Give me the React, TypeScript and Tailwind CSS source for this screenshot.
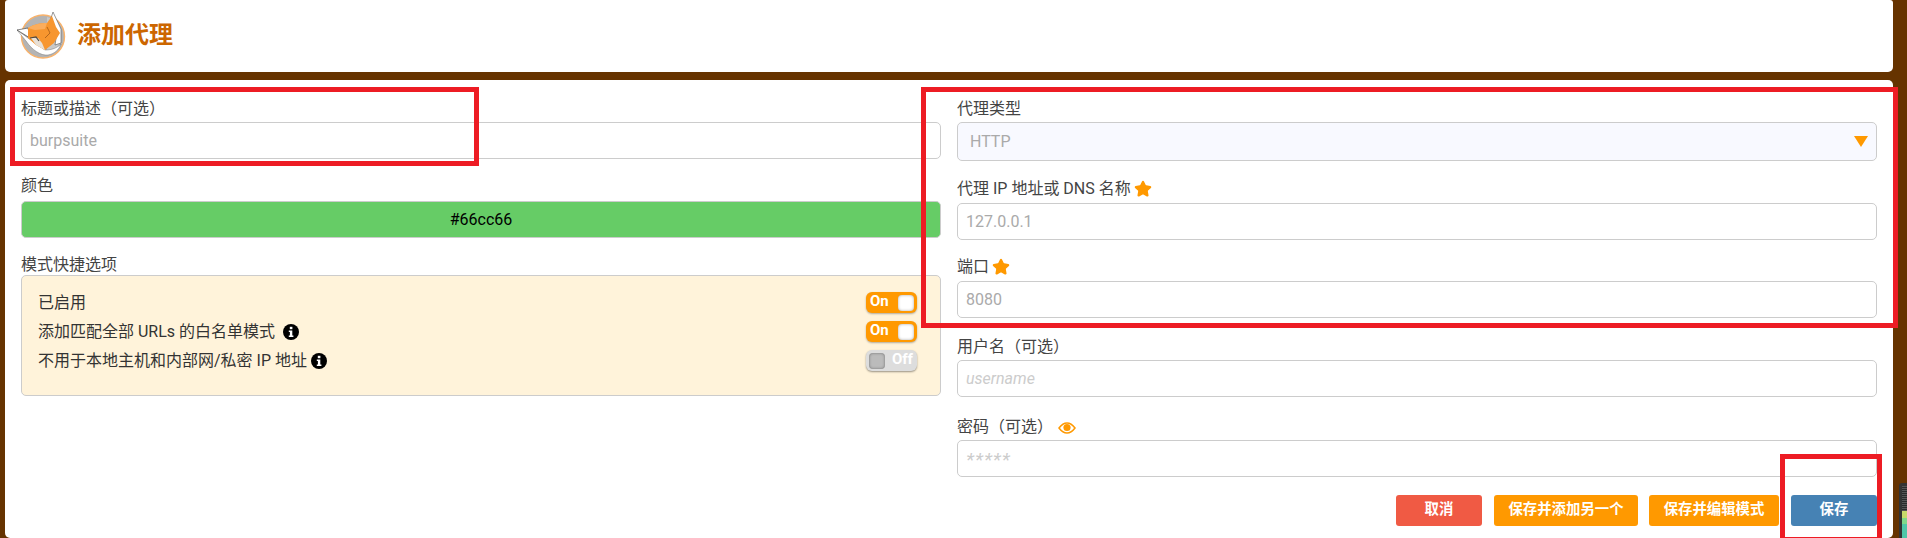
import { Star } from 'lucide-react'

const font = "font-['Roboto','Noto_Sans_CJK_SC',sans-serif]"

function FoxLogo() {
  return (
    <svg width="50" height="48" viewBox="0 0 50 48" className="shrink-0">
      <circle cx="26" cy="24.5" r="21.5" fill="#b4b4b4" stroke="#f9b26a" strokeWidth="1.4" />
      <path d="M30 5A19 19 0 0 1 44 24.5A19 19 0 0 1 30 43Z" fill="#c9c9c9" />
      <path d="M0 18L9 29C15 38 24 44 31 43C37 42 42 38 44 32C39 37 33 38 28 38L11 26Z" fill="#fff" stroke="#777" strokeWidth="0.5" />
      <path d="M36 0L44 17L44 31L38 33L40 20L33 9Z" fill="#fff" stroke="#555" strokeWidth="0.6" />
      <path d="M0 18L11 16L13 26Z" fill="#fff" stroke="#333" strokeWidth="0.6" />
      <path d="M11 16C17 12 24 11 30 11L35 4L39 15L43 21L37 31L28 38L19 33L11 26Z" fill="#f7962f" />
      <path d="M11 16C17 12 24 11 30 11L28 17L18 18Z" fill="#fbad5c" />
      <path d="M14 26L21 26L25 31L28 38L19 33Z" fill="#e8e0d6" />
      <path d="M13 26L19 25L22 29" fill="none" stroke="#4d4a46" strokeWidth="1.2" />
      <path d="M30 15L33 21L28 26" fill="none" stroke="#b4661c" strokeWidth="1" />
    </svg>
  )
}

function Toggle({ on }: { on: boolean }) {
  if (on) {
    return (
      <div className="flex h-[21px] w-[51px] items-center justify-between rounded-[6px] bg-[#ff9900] pl-[4px] pr-[3px] shadow-[0_1px_2px_rgba(0,0,0,0.3)]">
        <span className="pb-[2px] text-[15px] font-bold leading-none text-[#fff]">On</span>
        <span className="h-[16px] w-[16px] rounded-[4px] bg-white shadow-[inset_0_0_3px_rgba(0,0,0,0.35)]" />
      </div>
    )
  }
  return (
    <div className="flex h-[21px] w-[51px] items-center justify-between rounded-[6px] bg-[#dddddd] pl-[3px] pr-[4px] shadow-[0_1px_2px_rgba(0,0,0,0.4)]">
      <span className="h-[16px] w-[16px] rounded-[4px] bg-[#bbbbbb] shadow-[inset_0_0_3px_rgba(0,0,0,0.4)]" />
      <span className="pb-[2px] text-[15px] font-bold leading-none text-white">Off</span>
    </div>
  )
}

function Field({ label, value, italic, className, labelClass = 'pb-[5px]' }: { label: React.ReactNode; value: React.ReactNode; italic?: boolean; className?: string; labelClass?: string }) {
  return (
    <div className={className}>
      <div className={`flex h-[22px] items-center text-[#444] ${labelClass}`}>{label}</div>
      <div className={`flex h-[37px] items-center rounded-[5px] border border-[#cccccc] pl-[8px] pt-[1px] ${italic ? 'italic text-[#cccccc]' : 'text-[#aaaaaa]'}`}>{value}</div>
    </div>
  )
}

function FilledStar() {
  return <Star size={18} fill="#ff9900" stroke="#ff9900" className="ml-[3px]" />
}

const stateRows = [
  { label: '已启用', on: true, infoGap: '' },
  { label: '添加匹配全部 URLs 的白名单模式', on: true, infoGap: 'ml-[8px]' },
  { label: '不用于本地主机和内部网/私密 IP 地址', on: false, infoGap: 'ml-[4px]' },
]

export default function App() {
  return (
    <div className={`${font} relative h-[538px] overflow-hidden bg-[#663300] pl-[5px] pr-[14px] text-[16px]`}>
      <header className="flex h-[72px] items-center rounded-b-[5px] rounded-t-[3px] bg-white pl-[12px]">
        <FoxLogo />
        <h1 className="ml-[10px] pb-[2px] text-[24px] font-bold text-[#cc6600]">添加代理</h1>
      </header>

      <main className="mt-[8px] h-[458px] rounded-[5px] bg-white px-[16px] pt-[20px]">
        <div className="grid grid-cols-2 gap-x-[16px]">
          <div>
            <Field label="标题或描述（可选）" value="burpsuite" />
            <div className="mt-[17px] flex h-[25px] items-center pb-[5px] text-[#444]">颜色</div>
            <div className="flex h-[37px] items-center justify-center rounded-[5px] border border-[#cccccc] bg-[#66cc66] text-black">#66cc66</div>
            <div className="mt-[15px] flex h-[22px] items-center pt-[2px] text-[#444]">模式快捷选项</div>
            <div className="h-[121px] rounded-[5px] border border-[#cccccc] bg-[#fff3da] pl-[16px] pr-[23px] pt-[12px]">
              {stateRows.map((row) => (
                <div key={row.label} className="flex h-[29px] items-center justify-between text-[#333]">
                  <span className="flex items-center">
                    {row.label}
                    {row.infoGap && (
                      <svg width="16" height="16" viewBox="0 0 16 16" className={row.infoGap}>
                        <circle cx="8" cy="8" r="8" fill="#000" />
                        <rect x="6.8" y="2.8" width="2.6" height="2.4" fill="#fff" />
                        <path d="M5.8 6.5H9.3V11.4H10.4V13H5.8V11.4H6.9V8.1H5.8Z" fill="#fff" />
                      </svg>
                    )}
                  </span>
                  <Toggle on={row.on} />
                </div>
              ))}
            </div>
          </div>

          <div>
            <div className="flex h-[22px] items-center pb-[5px] text-[#444]">代理类型</div>
            <div className="flex h-[39px] items-center justify-between rounded-[5px] border border-[#cccccc] bg-[#f8f9ff] pl-[12px] pr-[8px] text-[#aaaaaa]">
              HTTP
              <svg width="14" height="11" viewBox="0 0 14 11"><path d="M0 0H14L7 11Z" fill="#ff9900" /></svg>
            </div>
            <Field
              className="mt-[20px]"
              labelClass="pb-[7px]"
              label={<>代理 IP 地址或 DNS 名称<FilledStar /></>}
              value="127.0.0.1"
            />
            <Field
              className="mt-[19px]"
              labelClass="pb-[7px]"
              label={<>端口<FilledStar /></>}
              value="8080"
            />
            <Field className="mt-[20px]" label="用户名（可选）" value="username" italic />
            <Field
              className="mt-[21px]"
              label={
                <>
                  密码（可选）
                  <svg width="18" height="12" viewBox="0 0 18 12" className="ml-[5px] mt-[3px]">
                    <path d="M1 6C4 2 6.5 1 9 1S14 2 17 6C14 10 11.5 11 9 11S4 10 1 6Z" fill="none" stroke="#ff9900" strokeWidth="1.5" />
                    <circle cx="9" cy="5.5" r="3.6" fill="#ff9900" />
                  </svg>
                </>
              }
              value={<span className="text-[19px] leading-none tracking-[1px]">*****</span>}
              italic
            />
            <div className="mt-[18px] flex justify-end text-[14.4px] font-bold text-white">
              <button className="h-[31px] w-[86px] rounded-[3px] bg-[#f05a44] pb-[1px]">取消</button>
              <button className="ml-[12px] h-[31px] w-[144px] rounded-[3px] bg-[#ff9900] pb-[1px]">保存并添加另一个</button>
              <button className="ml-[11px] h-[31px] w-[130px] rounded-[3px] bg-[#ff9900] pb-[1px]">保存并编辑模式</button>
              <button className="ml-[12px] h-[31px] w-[86px] rounded-[3px] bg-[#4682b4] pb-[1px]">保存</button>
            </div>
          </div>
        </div>
      </main>

      {/* red annotation boxes */}
      <div className="absolute left-[10px] top-[87px] h-[79px] w-[469px] border-[5px] border-[#ed1c24]" />
      <div className="absolute left-[921px] top-[87px] h-[241px] w-[977px] border-[5px] border-[#ed1c24]" />
      <div className="absolute left-[1780px] top-[454px] h-[88px] w-[102px] border-[5px] border-[#ed1c24]" />

      {/* corner of the desktop widget behind the window */}
      <div className="absolute left-[1899px] top-[483px] h-[60px] w-[12px] rounded-tl-[3px] bg-[#333] pl-[3px] pt-[3px]">
        <div className="h-[25px] bg-[repeating-linear-gradient(180deg,#555_0,#555_1px,#2a2a2a_1px,#2a2a2a_2px)]" />
        <div className="h-[7px] bg-[#c8d96a]" />
        <div className="h-[6px] bg-[#7fd98a]" />
        <div className="h-[20px] bg-[#4fc7a8]" />
      </div>
    </div>
  )
}
